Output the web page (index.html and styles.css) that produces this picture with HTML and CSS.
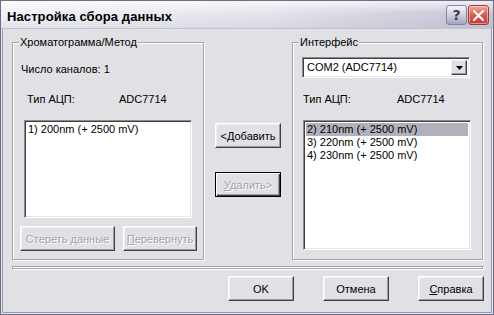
FILE: index.html
```html
<!DOCTYPE html>
<html lang="ru">
<head>
    <meta charset="UTF-8">
    <title>Настройка сбора данных</title>
    <link rel="stylesheet" href="styles.css">
</head>
<body>
    <div class="window">
        <div class="titlebar">
            <span class="title">Настройка сбора данных</span>
            <div class="caption-buttons">
                <span class="cap-btn help">?</span>
                <span class="cap-btn close">
                    <svg width="13" height="13" viewBox="0 0 13 13">
                        <path d="M2 2 L11 11 M11 2 L2 11" stroke="#fff" stroke-width="2.2" stroke-linecap="round"/>
                    </svg>
                </span>
            </div>
        </div>

        <div class="client">
            <div class="main">
                <div class="group group-left">
                    <span class="group-title">Хроматограмма/Метод</span>
                    <div class="channels">Число каналов: 1</div>
                    <div class="adc">
                        <span class="adc-label">Тип АЦП:</span>
                        <span>ADC7714</span>
                    </div>
                    <div class="listbox list-left">
                        <div class="item">1) 200nm (+ 2500 mV)</div>
                    </div>
                    <div class="group-buttons">
                        <button class="btn disabled btn-clear">Стереть данные</button>
                        <button class="btn disabled btn-flip"><u>П</u>еревернуть</button>
                    </div>
                </div>

                <div class="middle">
                    <button class="btn btn-mid">&lt;<u>Д</u>обавить</button>
                    <button class="btn btn-mid default disabled"><u>У</u>далить&gt;</button>
                </div>

                <div class="group group-right">
                    <span class="group-title">Интерфейс</span>
                    <div class="combo">
                        <span class="combo-text">COM2 (ADC7714)</span>
                        <span class="combo-arrow">
                            <svg width="7" height="4" viewBox="0 0 7 4"><path d="M0 0 H7 L3.5 4 Z" fill="#000"/></svg>
                        </span>
                    </div>
                    <div class="adc adc-right">
                        <span class="adc-label">Тип АЦП:</span>
                        <span>ADC7714</span>
                    </div>
                    <div class="listbox list-right">
                        <div class="item selected">2) 210nm (+ 2500 mV)</div>
                        <div class="item">3) 220nm (+ 2500 mV)</div>
                        <div class="item">4) 230nm (+ 2500 mV)</div>
                    </div>
                </div>
            </div>

            <div class="separator"></div>

            <div class="footer">
                <button class="btn btn-foot">OK</button>
                <button class="btn btn-foot">Отмена</button>
                <button class="btn btn-foot"><u>С</u>правка</button>
            </div>
        </div>
    </div>
</body>
</html>
```

FILE: styles.css
```css
* {
    box-sizing: border-box;
}

body {
    margin: 0;
    font-family: "Liberation Sans", Arial, sans-serif;
    font-size: 11px;
    color: #000;
    background: #fff;
}

.window {
    width: 494px;
    height: 315px;
    border: 1px solid #6e6e8a;
    background: #e1e0e4;
    display: flex;
    flex-direction: column;
}

/* title bar */
.titlebar {
    height: 28px;
    display: flex;
    align-items: flex-start;
    justify-content: space-between;
    padding: 4px 4px 0 6px;
    background:
        linear-gradient(to bottom, rgba(255,255,255,0.7), rgba(255,255,255,0) 45%, rgba(150,150,175,0.15)),
        linear-gradient(to right, #f2f2f6, #e4e4ec 55%, #c6c6d6);
    border-bottom: 1px solid #c2c2d0;
}

.title {
    font-size: 13px;
    font-weight: bold;
    line-height: 15px;
    margin-top: 4px;
    letter-spacing: 0.1px;
}

.caption-buttons {
    display: flex;
    gap: 1px;
}

.cap-btn {
    width: 21px;
    height: 20px;
    border-radius: 3px;
    display: flex;
    align-items: center;
    justify-content: center;
}

.help {
    background: linear-gradient(to bottom, #f4f4fa, #c8c8da 60%, #a4a4bc);
    border: 1px solid #85859f;
    color: #3c3c58;
    font-size: 14px;
    font-weight: bold;
    font-family: "DejaVu Sans", sans-serif;
}

.close {
    background: linear-gradient(to bottom, #f2a8a0, #dd5a4e 50%, #c23a30);
    border: 1px solid #a33a32;
    box-shadow: inset 0 0 0 1px rgba(255,255,255,0.45);
}

/* client area */
.client {
    flex: 1;
    border: solid #e7e7ee;
    border-width: 0 1px 1px 1px;
    box-shadow: inset 1px 0 #9a9aae, inset -1px 0 #9a9aae, inset 0 -1px #9a9aae;
    padding: 13px 8px 0 10px;
}

.main {
    display: flex;
    height: 218px;
}

.group {
    position: relative;
    height: 218px;
    border: 1px solid #a6a5ac;
    box-shadow: inset 1px 1px 0 #fff, 1px 1px 0 #fff;
}

.group-left {
    width: 192px;
}

.group-right {
    width: 191px;
}

.group-title {
    position: absolute;
    top: -7px;
    left: 6px;
    padding: 0 1px;
    line-height: 13px;
    background: #e1e0e4;
}

.channels {
    margin: 20px 0 0 8px;
    line-height: 13px;
}

.adc {
    display: flex;
    margin: 17px 0 0 14px;
    line-height: 13px;
}

.adc-label {
    width: 92px;
}

.adc-right {
    margin: 15px 0 0 10px;
}

.adc-right .adc-label {
    width: 94px;
}

.listbox {
    background: #fff;
    border: 1px solid;
    border-color: #8a8a8e #fff #fff #8a8a8e;
    box-shadow: inset 1px 1px 0 #404040, inset -1px -1px 0 #e6e5e8;
    padding: 2px;
}

.list-left {
    width: 168px;
    height: 98px;
    margin: 14px 0 0 11px;
}

.list-right {
    width: 168px;
    height: 130px;
    margin: 14px 0 0 10px;
}

.item {
    line-height: 13px;
    padding-left: 1px;
    white-space: nowrap;
}

.item.selected {
    background: #b1b1bc;
}

.group-buttons {
    display: flex;
    gap: 8px;
    margin: 8px 0 0 7px;
}

/* buttons */
.btn {
    font-family: "Liberation Sans", Arial, sans-serif;
    font-size: 11px;
    height: 25px;
    padding: 0;
    background: #e1e0e4;
    border: 1px solid;
    border-color: #fff #404040 #404040 #fff;
    box-shadow: inset -1px -1px 0 #9d9ca2, inset 1px 1px 0 #f2f2f4;
    color: #000;
}

.btn u {
    text-decoration: underline;
    text-underline-offset: 1px;
}

.btn.disabled {
    color: #a5a4aa;
    text-shadow: 1px 1px 0 #fff;
}

.btn.default {
    border: 1px solid #000;
    box-shadow: inset 1px 1px 0 #fff, inset -1px -1px 0 #404040, inset -2px -2px 0 #9d9ca2;
}

.btn-clear {
    width: 95px;
}

.btn-flip {
    width: 74px;
}

.middle {
    width: 66px;
    margin: 0 11px;
    display: flex;
    flex-direction: column;
    padding-top: 81px;
    gap: 24px;
}

.btn-mid {
    width: 66px;
}

/* combo box */
.combo {
    display: flex;
    width: 168px;
    height: 21px;
    margin: 14px 0 0 9px;
    background: #fff;
    border: 1px solid;
    border-color: #8a8a8e #fff #fff #8a8a8e;
    box-shadow: inset 1px 1px 0 #404040, inset -1px -1px 0 #e6e5e8;
    padding: 2px;
}

.combo-text {
    flex: 1;
    line-height: 15px;
    padding-left: 2px;
}

.combo-arrow {
    width: 16px;
    display: flex;
    align-items: center;
    justify-content: center;
    background: #e1e0e4;
    border: 1px solid;
    border-color: #f2f2f4 #404040 #404040 #f2f2f4;
    box-shadow: inset -1px -1px 0 #9d9ca2;
}

/* bottom */
.separator {
    height: 4px;
    margin-top: 6px;
    border: 1px solid;
    border-color: #a0a0a6 #fff #fff #a0a0a6;
    box-shadow: inset -1px -1px 0 #a0a0a6, inset 1px 1px 0 #fff;
}

.footer {
    display: flex;
    justify-content: flex-end;
    gap: 29px;
    margin-top: 6px;
}

.btn-foot {
    width: 66px;
}
```
